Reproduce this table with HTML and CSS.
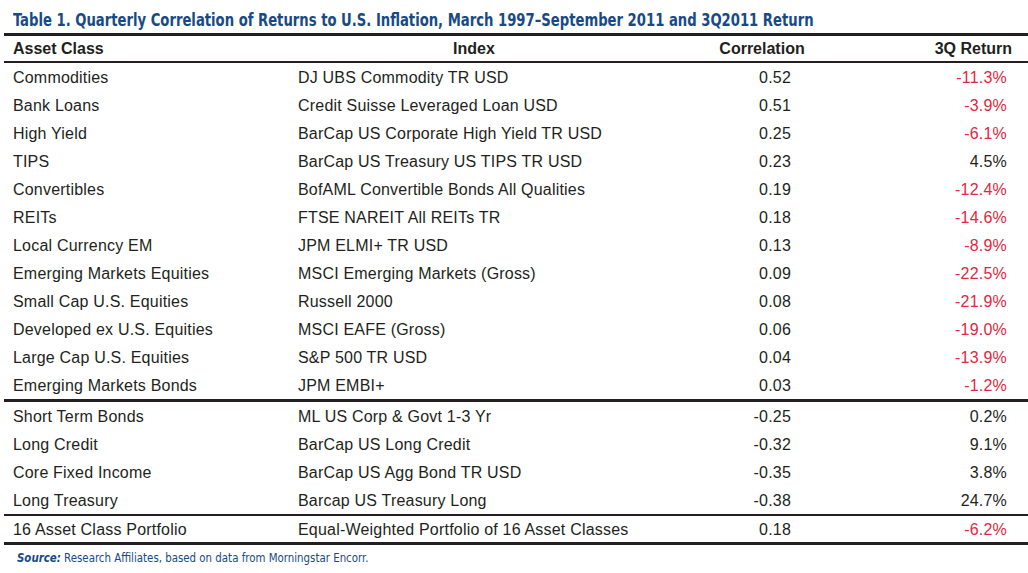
FILE: index.html
```html
<!DOCTYPE html>
<html>
<head>
<meta charset="utf-8">
<link rel="stylesheet" href="styles.css">
</head>
<body>
<div class="page">
  <h1 class="title"><span class="title-text">Table 1. Quarterly Correlation of Returns to U.S. Inflation, March 1997–September 2011 and 3Q2011 Return</span></h1>
  <div class="tbl">
    <div class="row head">
      <div class="cell asset">Asset Class</div>
      <div class="cell h-index">Index</div>
      <div class="cell h-corr">Correlation</div>
      <div class="cell h-ret">3Q Return</div>
    </div>
    <div class="group first">
      <div class="row"><div class="cell asset">Commodities</div><div class="cell index">DJ UBS Commodity TR USD</div><div class="cell corr">0.52</div><div class="cell ret neg">-11.3%</div></div>
      <div class="row"><div class="cell asset">Bank Loans</div><div class="cell index">Credit Suisse Leveraged Loan USD</div><div class="cell corr">0.51</div><div class="cell ret neg">-3.9%</div></div>
      <div class="row"><div class="cell asset">High Yield</div><div class="cell index">BarCap US Corporate High Yield TR USD</div><div class="cell corr">0.25</div><div class="cell ret neg">-6.1%</div></div>
      <div class="row"><div class="cell asset">TIPS</div><div class="cell index">BarCap US Treasury US TIPS TR USD</div><div class="cell corr">0.23</div><div class="cell ret">4.5%</div></div>
      <div class="row"><div class="cell asset">Convertibles</div><div class="cell index">BofAML Convertible Bonds All Qualities</div><div class="cell corr">0.19</div><div class="cell ret neg">-12.4%</div></div>
      <div class="row"><div class="cell asset">REITs</div><div class="cell index">FTSE NAREIT All REITs TR</div><div class="cell corr">0.18</div><div class="cell ret neg">-14.6%</div></div>
      <div class="row"><div class="cell asset">Local Currency EM</div><div class="cell index">JPM ELMI+ TR USD</div><div class="cell corr">0.13</div><div class="cell ret neg">-8.9%</div></div>
      <div class="row"><div class="cell asset">Emerging Markets Equities</div><div class="cell index">MSCI Emerging Markets (Gross)</div><div class="cell corr">0.09</div><div class="cell ret neg">-22.5%</div></div>
      <div class="row"><div class="cell asset">Small Cap U.S. Equities</div><div class="cell index">Russell 2000</div><div class="cell corr">0.08</div><div class="cell ret neg">-21.9%</div></div>
      <div class="row"><div class="cell asset">Developed ex U.S. Equities</div><div class="cell index">MSCI EAFE (Gross)</div><div class="cell corr">0.06</div><div class="cell ret neg">-19.0%</div></div>
      <div class="row"><div class="cell asset">Large Cap U.S. Equities</div><div class="cell index">S&amp;P 500 TR USD</div><div class="cell corr">0.04</div><div class="cell ret neg">-13.9%</div></div>
      <div class="row"><div class="cell asset">Emerging Markets Bonds</div><div class="cell index">JPM EMBI+</div><div class="cell corr">0.03</div><div class="cell ret neg">-1.2%</div></div>
    </div>
    <div class="group">
      <div class="row"><div class="cell asset">Short Term Bonds</div><div class="cell index">ML US Corp &amp; Govt 1-3 Yr</div><div class="cell corr">-0.25</div><div class="cell ret">0.2%</div></div>
      <div class="row"><div class="cell asset">Long Credit</div><div class="cell index">BarCap US Long Credit</div><div class="cell corr">-0.32</div><div class="cell ret">9.1%</div></div>
      <div class="row"><div class="cell asset">Core Fixed Income</div><div class="cell index">BarCap US Agg Bond TR USD</div><div class="cell corr">-0.35</div><div class="cell ret">3.8%</div></div>
      <div class="row"><div class="cell asset">Long Treasury</div><div class="cell index">Barcap US Treasury Long</div><div class="cell corr">-0.38</div><div class="cell ret">24.7%</div></div>
    </div>
    <div class="group last">
      <div class="row total"><div class="cell asset">16 Asset Class Portfolio</div><div class="cell index">Equal-Weighted Portfolio of 16 Asset Classes</div><div class="cell corr">0.18</div><div class="cell ret neg">-6.2%</div></div>
    </div>
  </div>
  <p class="source"><span class="source-text"><span class="src-label">Source:</span> Research Affiliates, based on data from Morningstar Encorr.</span></p>
</div>
</body>
</html>
```
FILE: styles.css
```css
html, body {
  margin: 0;
  padding: 0;
  background: #ffffff;
}
.page {
  width: 1028px;
  height: 573px;
  padding: 0 0 0 4px;
  box-sizing: border-box;
  font-family: "Liberation Sans", Arial, sans-serif;
  color: #231f20;
  overflow: hidden;
}
.title {
  margin: 0;
  padding: 10px 0 0 9px;
  height: 23px;
  font-family: "DejaVu Sans Condensed", "Liberation Sans", sans-serif;
  font-stretch: condensed;
  font-weight: bold;
  font-size: 17px;
  line-height: 20px;
  color: #184a86;
  white-space: nowrap;
}
.title-text {
  display: inline-block;
  transform: scaleX(0.862);
  transform-origin: left center;
}
.tbl {
  width: 1024px;
  border-top: 3px solid #231f20;
  font-size: 16px;
  letter-spacing: 0.2px;
}
.row {
  display: grid;
  grid-template-columns: 286px 368px 208px 162px;
  height: 28px;
  align-items: center;
  white-space: nowrap;
}
.row.head {
  height: 25px;
  font-weight: bold;
  letter-spacing: 0;
  border-bottom: 2px solid #231f20;
}
.row.total {
  height: 26px;
}
.group {
  border-bottom: 2px solid #231f20;
}
.group.first {
  border-bottom-width: 3px;
}
.group.last {
  border-bottom: 3px solid #231f20;
}
.cell {
  line-height: 20px;
  padding-top: 1px;
}
.head .cell {
  padding-top: 0;
}
.asset { padding-left: 9px; }
.index { padding-left: 8px; }
.h-index { text-align: center; }
.h-corr { text-align: center; }
.h-ret { text-align: right; padding-right: 16px; }
.corr { text-align: right; padding-right: 75px; }
.ret { text-align: right; padding-right: 21px; }
.neg { color: #e3273f; }
.source {
  margin: 0;
  padding: 5px 0 0 13px;
  font-family: "DejaVu Sans Condensed", "Liberation Sans", sans-serif;
  font-stretch: condensed;
  font-size: 12.5px;
  line-height: 16px;
  color: #184a86;
  white-space: nowrap;
}
.source-text {
  display: inline-block;
  transform: scaleX(0.91);
  transform-origin: left center;
}
.src-label {
  font-weight: bold;
  font-style: italic;
}
```
